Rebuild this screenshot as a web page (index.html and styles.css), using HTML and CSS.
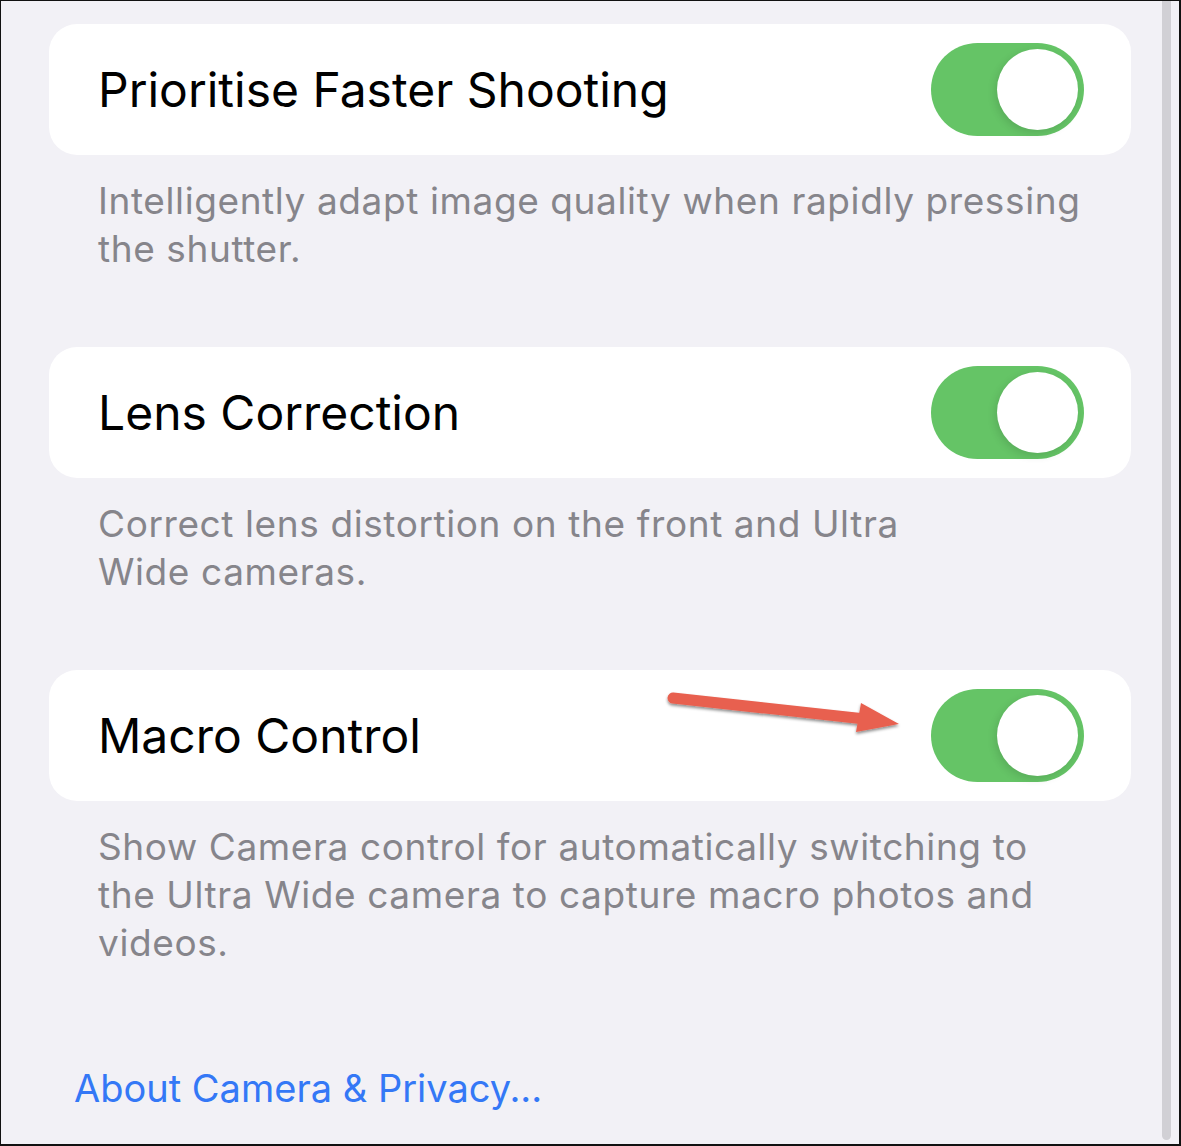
FILE: index.html
```html
<!DOCTYPE html>
<html lang="en">
<head>
    <meta charset="UTF-8">
    <meta name="viewport" content="width=device-width, initial-scale=1.0">
    <title>Camera Settings</title>
    <link rel="stylesheet" href="styles.css">
</head>
<body>
    <div class="screen">
        <main class="settings">
            <section class="group">
                <div class="cell">
                    <span class="cell-label">Prioritise Faster Shooting</span>
                    <span class="switch on"><span class="knob"></span></span>
                </div>
                <p class="footer">Intelligently adapt image quality when rapidly pressing the shutter.</p>
            </section>

            <section class="group">
                <div class="cell">
                    <span class="cell-label">Lens Correction</span>
                    <span class="switch on"><span class="knob"></span></span>
                </div>
                <p class="footer">Correct lens distortion on the front and Ultra<br>Wide cameras.</p>
            </section>

            <section class="group">
                <div class="cell">
                    <span class="cell-label">Macro Control</span>
                    <span class="switch on"><span class="knob"></span></span>
                </div>
                <p class="footer">Show Camera control for automatically switching to the Ultra&nbsp;Wide camera to capture macro photos and videos.</p>
            </section>

            <a class="about-link" href="#">About Camera &amp; Privacy...</a>
        </main>

        <div class="scrollbar"></div>

        <!-- annotation arrow pointing at the Macro Control switch -->
        <svg class="arrow" width="250" height="50" viewBox="0 0 250 50">
            <defs>
                <filter id="arrow-shadow" x="-10%" y="-40%" width="120%" height="180%">
                    <feDropShadow dx="0" dy="2" stdDeviation="1.5" flood-color="#000" flood-opacity="0.45"/>
                </filter>
            </defs>
            <g filter="url(#arrow-shadow)" fill="#e8604f">
                <line x1="8" y1="8" x2="200" y2="29" stroke="#e8604f" stroke-width="11" stroke-linecap="round"/>
                <polygon points="196,13 234,34 191,42"/>
            </g>
        </svg>
    </div>
</body>
</html>
```

FILE: styles.css
```css
body {
    margin: 0;
    background: #fff;
    font-family: Inter, "Noto Sans", sans-serif;
}
.screen {
    position: relative;
    display: flex;
    width: 1181px;
    height: 1146px;
    box-sizing: border-box;
    border: 1px solid #111;
    border-right-width: 2px;
    border-bottom-width: 2px;
    background: #f2f1f6;
    overflow: hidden;
}
.settings {
    flex: 1;
    display: flex;
    flex-direction: column;
    gap: 74px;
    padding: 23px 31px 0 48px;
}
.cell {
    display: flex;
    align-items: center;
    justify-content: space-between;
    height: 131px;
    padding: 0 47px 0 49px;
    background: #fff;
    border-radius: 28px;
}
.cell-label {
    font-size: 48px;
    color: #000;
}
.switch {
    position: relative;
    width: 153px;
    height: 93px;
    border-radius: 47px;
    background: #dcdce0;
}
.switch.on {
    background: #65c466;
}
.knob {
    position: absolute;
    top: 6px;
    right: 6px;
    width: 81px;
    height: 81px;
    border-radius: 50%;
    background: #fff;
    box-shadow: -2px 3px 8px rgba(0, 0, 0, 0.12);
}
.footer {
    margin: 22px 0 0;
    padding: 0 49px;
    font-size: 37px;
    line-height: 48px;
    letter-spacing: 0.6px;
    color: #86858b;
}
.about-link {
    display: block;
    margin-top: 23px;
    margin-left: 25px;
    font-size: 38px;
    line-height: 48px;
    color: #3478f6;
    text-decoration: none;
}
.scrollbar {
    width: 9px;
    height: 1139px;
    margin-right: 8px;
    border-radius: 0 0 5px 5px;
    background: #d1d0d5;
}
.arrow {
    position: absolute;
    left: 664px;
    top: 689px;
}
```
